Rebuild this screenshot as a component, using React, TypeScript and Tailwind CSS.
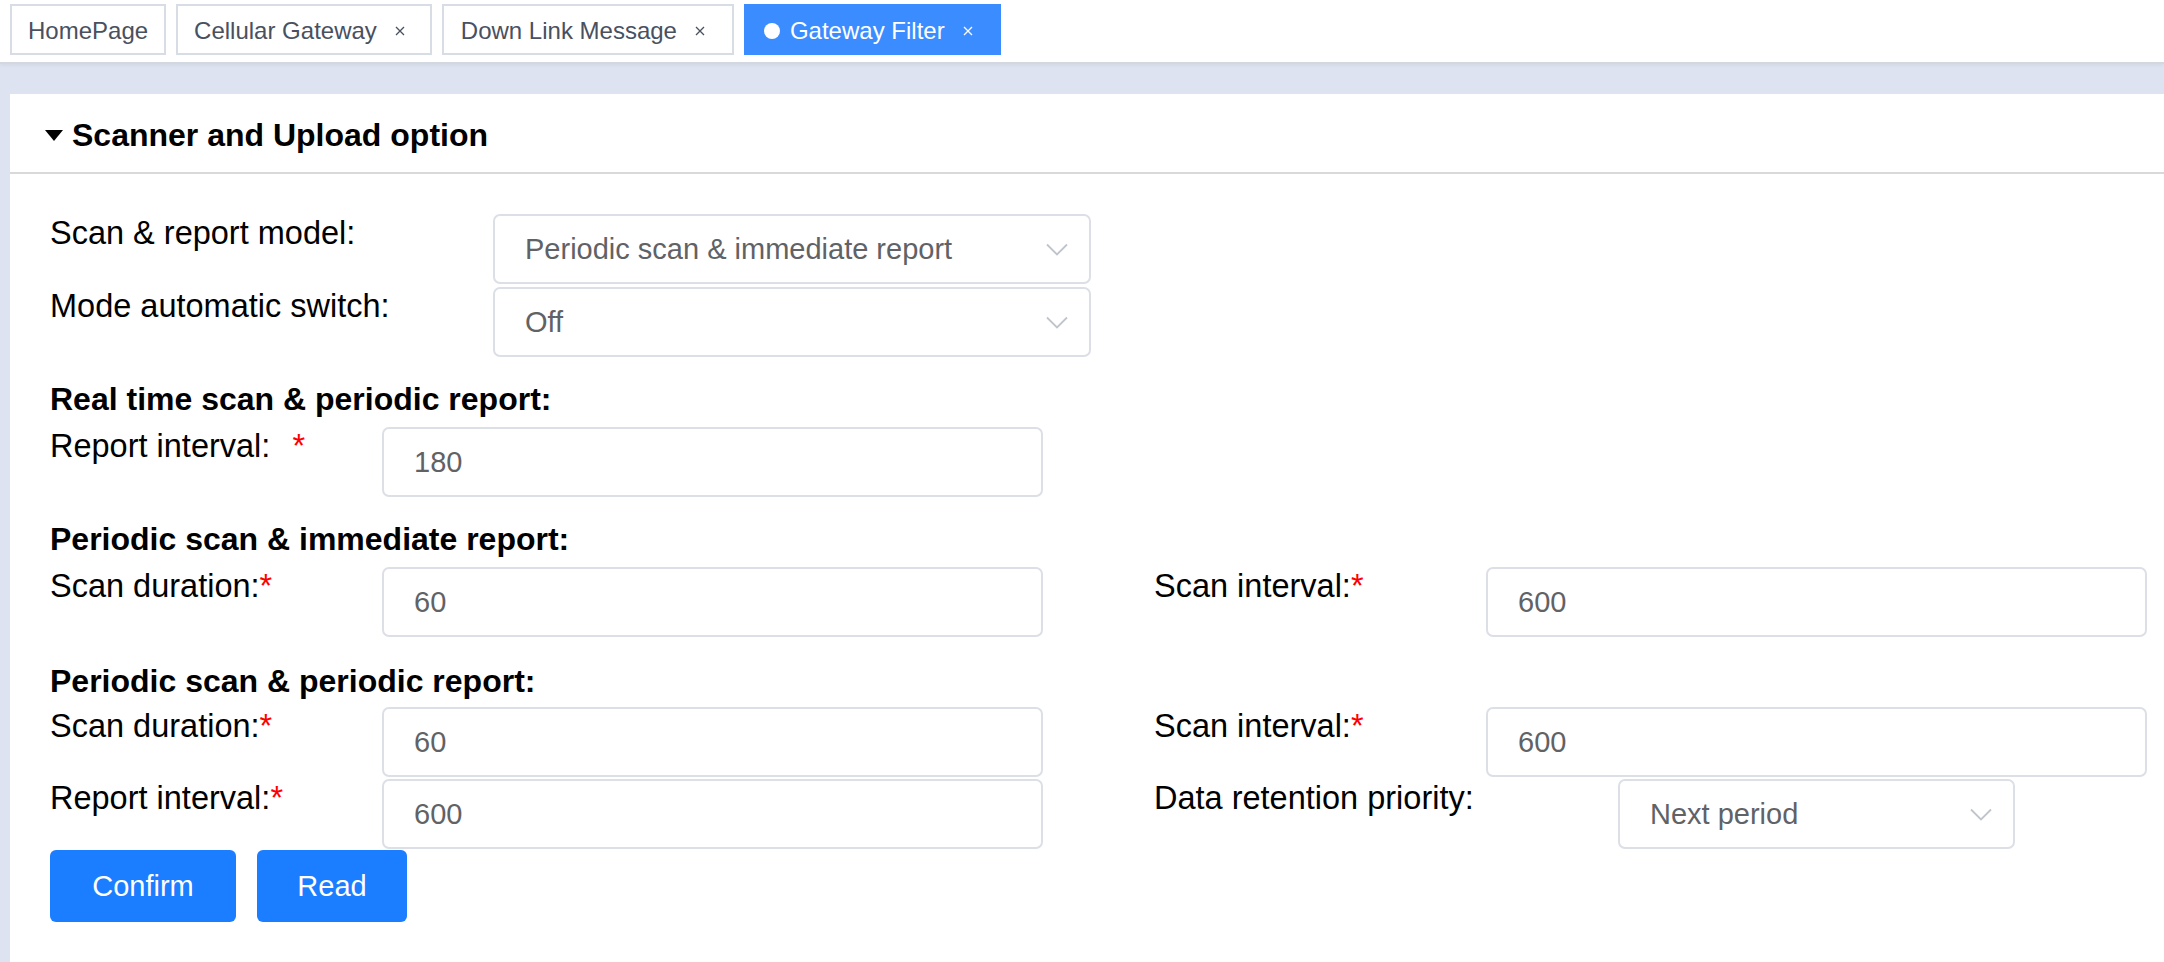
import React from 'react';

const font = "font-['Liberation_Sans',Arial,Helvetica,sans-serif]";

function CloseIcon({ light }: { light?: boolean }) {
  return (
    <svg width="10" height="10" viewBox="0 0 10 10" className="ml-[18px] shrink-0">
      <path d="M1 1 L9 9 M9 1 L1 9" stroke={light ? '#ffffff' : '#495060'} strokeWidth="1.3" fill="none" />
    </svg>
  );
}

function Chevron() {
  return (
    <svg width="22" height="13" viewBox="0 0 22 13" className="shrink-0">
      <path d="M1 1.5 L11 11.5 L21 1.5" stroke="#c0c4cc" strokeWidth="1.8" fill="none" />
    </svg>
  );
}

function Star({ spaced }: { spaced?: boolean }) {
  return <span className={spaced ? 'ml-[22px] text-[#ff0000]' : 'text-[#ff0000]'}>*</span>;
}

function TextBox({ value, className }: { value: string; className: string }) {
  return (
    <div className={`h-[70px] shrink-0 border-2 border-[#dcdfe6] rounded-[7px] bg-white flex items-center pl-[30px] text-[29px] text-[#606266] ${className}`}>
      {value}
    </div>
  );
}

function SelectBox({ value, className }: { value: string; className: string }) {
  return (
    <div className={`h-[70px] shrink-0 border-2 border-[#dcdfe6] rounded-[7px] bg-white flex items-center justify-between pl-[30px] pr-[21px] text-[29px] text-[#606266] ${className}`}>
      <span>{value}</span>
      <Chevron />
    </div>
  );
}

function Title({ children, className }: { children: React.ReactNode; className: string }) {
  return <div className={`text-[32px] leading-[37px] font-bold text-black ${className}`}>{children}</div>;
}

export default function App() {
  const tabs = [
    { name: 'HomePage', close: false, active: false, cls: 'pl-[16px] pr-[16px] bg-white border-[#d8dce5] text-[#495060]' },
    { name: 'Cellular Gateway', close: true, active: false, cls: 'pl-[16px] pr-[25px] bg-white border-[#d8dce5] text-[#495060]' },
    { name: 'Down Link Message', close: true, active: false, cls: 'pl-[17px] pr-[27px] bg-white border-[#d8dce5] text-[#495060]' },
    { name: 'Gateway Filter', close: true, active: true, cls: 'pl-[18px] pr-[26px] bg-[#3a8cff] border-[#3a8cff] text-white' },
  ];

  return (
    <div className={`w-full h-[962px] overflow-hidden bg-[#dde3f0] ${font}`}>
      {/* tags bar */}
      <div className="h-[64px] bg-white border-b-2 border-[#d3d7e0] flex items-start pt-[4px] pl-[10px] gap-[10px] shadow-[0_1px_4px_rgba(0,0,0,0.06)]">
        {tabs.map((t) => (
          <div key={t.name} className={`h-[51px] flex items-center pt-[6px] border-2 text-[24px] ${t.cls}`}>
            {t.active && <span className="w-[16px] h-[16px] rounded-full bg-white mr-[10px] -mt-[3px] shrink-0" />}
            <span className="leading-none -mt-[3px]">{t.name}</span>
            {t.close && <span className="-mt-[3px] flex"><CloseIcon light={t.active} /></span>}
          </div>
        ))}
      </div>

      {/* panel */}
      <div className="ml-[10px] mt-[30px] bg-white h-[900px]">
        <div className="h-[80px] flex items-center pl-[35px] pt-[4px] border-b-2 border-[#d9d9d9]">
          <svg width="18" height="11" viewBox="0 0 18 11" className="mr-[9px] shrink-0">
            <path d="M0 0 L18 0 L9 11 Z" fill="#000" />
          </svg>
          <span className="text-[32px] font-bold text-black">Scanner and Upload option</span>
        </div>

        <div className="pl-[40px] pt-[40px] text-[32.5px] leading-[37px] text-black">
          <div className="flex items-start">
            <div className="w-[443px] pt-[1px]">Scan &amp; report model:</div>
            <SelectBox value="Periodic scan & immediate report" className="w-[598px]" />
          </div>
          <div className="flex items-start mt-[3px]">
            <div className="w-[443px] pt-[1px]">Mode automatic switch:</div>
            <SelectBox value="Off" className="w-[598px]" />
          </div>

          <Title className="mt-[24px]">Real time scan &amp; periodic report:</Title>
          <div className="flex items-start mt-[9px]">
            <div className="w-[332px] pt-[1px]">
              Report interval:<Star spaced />
            </div>
            <TextBox value="180" className="w-[661px]" />
          </div>

          <Title className="mt-[24px]">Periodic scan &amp; immediate report:</Title>
          <div className="flex items-start mt-[9px]">
            <div className="w-[332px] pt-[1px]">
              Scan duration:<Star />
            </div>
            <TextBox value="60" className="w-[661px]" />
            <div className="w-[332px] ml-[111px] pt-[1px]">
              Scan interval:<Star />
            </div>
            <TextBox value="600" className="w-[661px]" />
          </div>

          <Title className="mt-[26px]">Periodic scan &amp; periodic report:</Title>
          <div className="flex items-start mt-[7px]">
            <div className="w-[332px] pt-[1px]">
              Scan duration:<Star />
            </div>
            <TextBox value="60" className="w-[661px]" />
            <div className="w-[332px] ml-[111px] pt-[1px]">
              Scan interval:<Star />
            </div>
            <TextBox value="600" className="w-[661px]" />
          </div>
          <div className="flex items-start mt-[2px]">
            <div className="w-[332px] pt-[1px]">
              Report interval:<Star />
            </div>
            <TextBox value="600" className="w-[661px]" />
            <div className="w-[464px] ml-[111px] pt-[1px]">Data retention priority:</div>
            <SelectBox value="Next period" className="w-[397px]" />
          </div>

          <div className="flex items-start gap-[21px] mt-[1px]">
            <button className="w-[186px] h-[72px] rounded-[6px] bg-[#1b7dff] text-white text-[29px]">Confirm</button>
            <button className="w-[150px] h-[72px] rounded-[6px] bg-[#1b7dff] text-white text-[29px]">Read</button>
          </div>
        </div>
      </div>
    </div>
  );
}
